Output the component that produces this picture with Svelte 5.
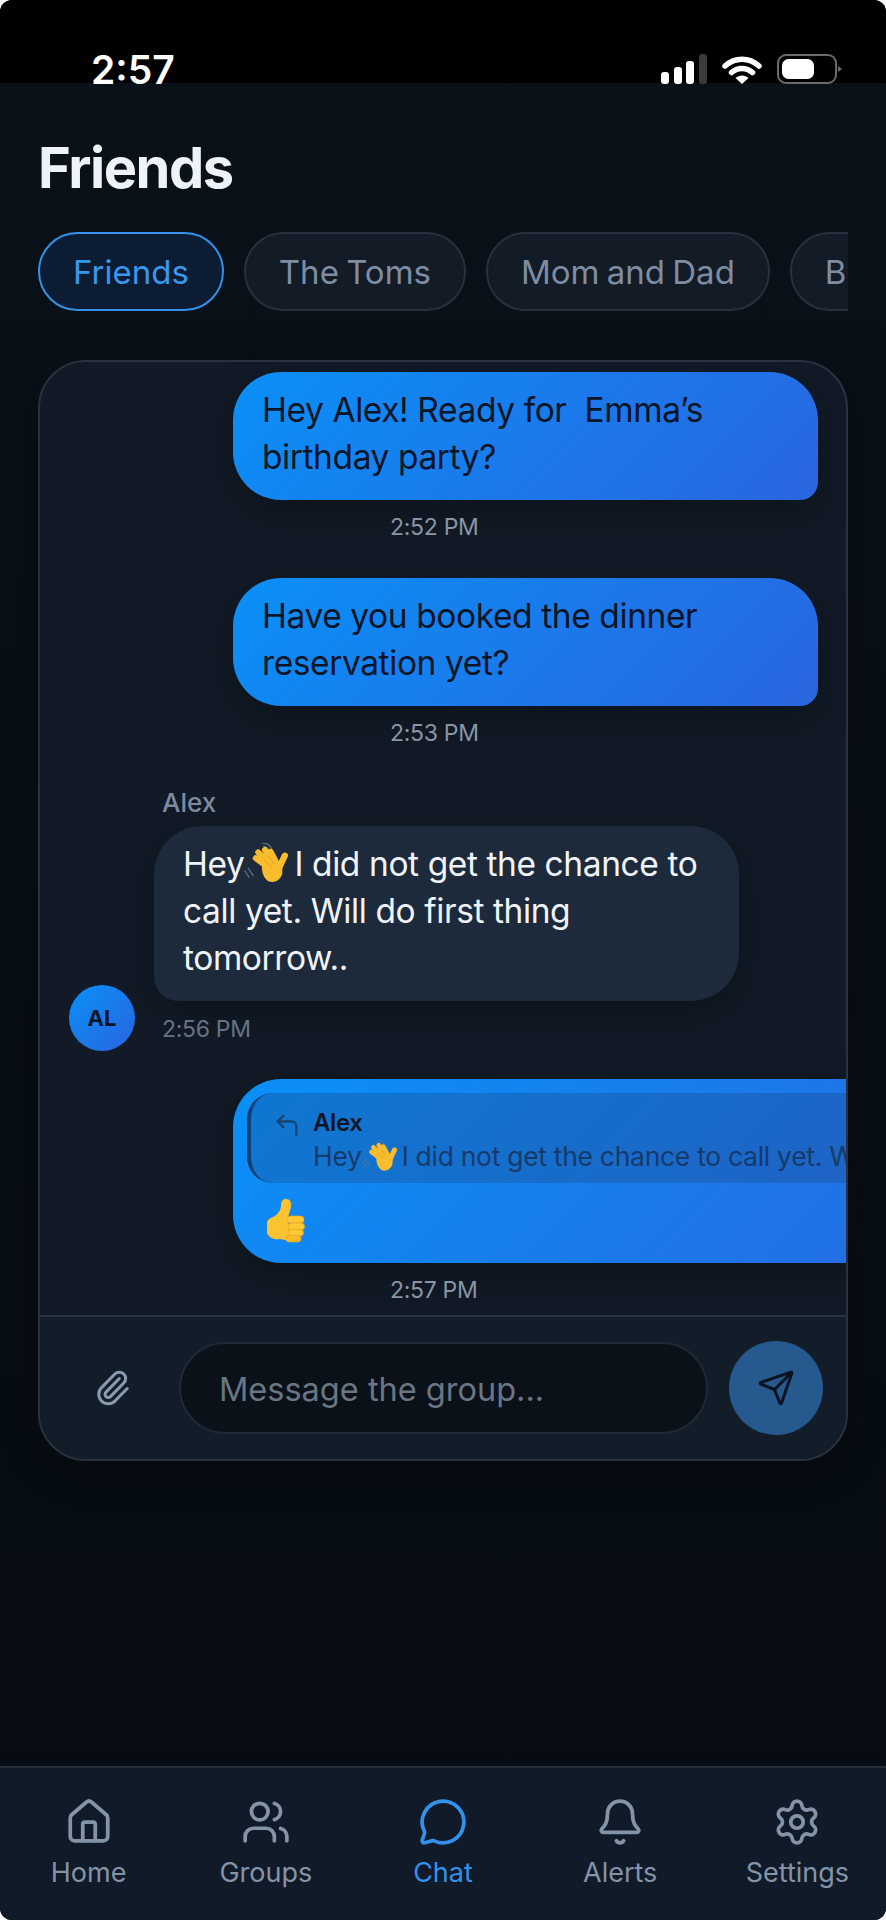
<script>
	const groups = ['Friends', 'The Toms', 'Mom and Dad', 'Best Friends'];

	const tabs = [
		{ label: 'Home', icon: 'home' },
		{ label: 'Groups', icon: 'users' },
		{ label: 'Chat', icon: 'chat', active: true },
		{ label: 'Alerts', icon: 'bell' },
		{ label: 'Settings', icon: 'gear' }
	];
</script>

{#snippet wave()}
	<svg class="wave" viewBox="0 0 60 50" aria-hidden="true">
		<path d="M5 30l6 9M1 33l5 8M23 4c3 0 6 2 7 4M22 0c4 0 9 2 11 6" fill="none" stroke="#6d7683" stroke-width="1.3" stroke-linecap="round" />
		<g stroke="#f9bc2e" stroke-width="7" stroke-linecap="round">
			<path d="M30 30 14 18M32 26 17 11M36 25 25 8M40 25 32 10" />
			<path d="M42 30 49 15" stroke-width="7.5" />
		</g>
		<path d="M22 24 46 22 46 36C44 44 37 48 30 46 24 43 20 34 22 24Z" fill="#f9bc2e" />
		<path d="M24 20 33 29M30 16 36 25" stroke="#e59a14" stroke-width="1" fill="none" />
	</svg>
{/snippet}

{#snippet icon(name)}
	<svg viewBox="0 0 24 24" fill="none" stroke="currentColor" stroke-width="1.8" stroke-linecap="round" stroke-linejoin="round" aria-hidden="true">
		{#if name === 'home'}
			<path d="M3 10a2 2 0 0 1 .7-1.5l7-6a2 2 0 0 1 2.6 0l7 6A2 2 0 0 1 21 10v9a2 2 0 0 1-2 2H5a2 2 0 0 1-2-2z" />
			<path d="M15 21v-8a1 1 0 0 0-1-1h-4a1 1 0 0 0-1 1v8" />
		{:else if name === 'users'}
			<path d="M16 21v-2a4 4 0 0 0-4-4H6a4 4 0 0 0-4 4v2" />
			<circle cx="9" cy="7" r="4" />
			<path d="M16 3.128a4 4 0 0 1 0 7.744" />
			<path d="M22 21v-2a4 4 0 0 0-3-3.87" />
		{:else if name === 'chat'}
			<path d="M2.992 16.342a2 2 0 0 1 .094 1.167l-1.065 3.29a1 1 0 0 0 1.236 1.168l3.413-.998a2 2 0 0 1 1.099.092 10 10 0 1 0-4.777-4.719" />
		{:else if name === 'bell'}
			<path d="M10.268 21a2 2 0 0 0 3.464 0" />
			<path d="M3.262 15.326A1 1 0 0 0 4 17h16a1 1 0 0 0 .74-1.673C19.41 13.956 18 12.499 18 8A6 6 0 0 0 6 8c0 4.499-1.411 5.956-2.738 7.326" />
		{:else if name === 'gear'}
			<path d="M9.671 4.136a2.34 2.34 0 0 1 4.659 0 2.34 2.34 0 0 0 3.319 1.915 2.34 2.34 0 0 1 2.33 4.033 2.34 2.34 0 0 0 0 3.831 2.34 2.34 0 0 1-2.33 4.033 2.34 2.34 0 0 0-3.319 1.915 2.34 2.34 0 0 1-4.659 0 2.34 2.34 0 0 0-3.32-1.915 2.34 2.34 0 0 1-2.33-4.033 2.34 2.34 0 0 0 0-3.831A2.34 2.34 0 0 1 6.35 6.051a2.34 2.34 0 0 0 3.319-1.915" />
			<circle cx="12" cy="12" r="3" />
		{/if}
	</svg>
{/snippet}

<div class="phone">
	<header class="status">
		<span class="clock">2:57</span>
		<div class="status-icons">
			<svg class="signal" viewBox="0 0 46 30" aria-hidden="true">
				<rect x="0" y="18" width="8" height="12" rx="3" fill="#fff" />
				<rect x="13" y="13" width="8" height="17" rx="3" fill="#fff" />
				<rect x="25" y="7" width="8" height="23" rx="3" fill="#fff" />
				<rect x="38" y="0" width="8" height="30" rx="3" fill="#3b3b3b" />
			</svg>
			<svg class="wifi" viewBox="0 0 40 28" aria-hidden="true">
				<path d="M3 10C13 1 27 1 37 10M9.5 16.5C15.5 11 24.5 11 30.5 16.5" fill="none" stroke="#fff" stroke-width="5.5" stroke-linecap="round" />
				<path d="M13.5 22C17 18.5 23 18.5 26.5 22L20 28Z" fill="#fff" />
			</svg>
			<svg class="battery" viewBox="0 0 65 30" aria-hidden="true">
				<rect x="1" y="1" width="58" height="28" rx="8" fill="none" stroke="#6a6a6a" stroke-width="2" />
				<rect x="5" y="5" width="32" height="20" rx="6.5" fill="#fff" />
				<path d="M61 12l4 3-4 3z" fill="#6a6a6a" />
			</svg>
		</div>
	</header>

	<main class="content">
		<h1 class="title">Friends</h1>

		<div class="chips">
			{#each groups as group, i}
				<button class="chip" class:active={i === 0}>{group}</button>
			{/each}
		</div>

		<section class="card">
			<div class="messages">
				<div class="msg-out">
					<div class="bubble out">Hey Alex! Ready for&nbsp; Emma’s birthday party?</div>
					<div class="time">2:52 PM</div>
				</div>

				<div class="msg-out">
					<div class="bubble out">Have you booked the dinner reservation yet?</div>
					<div class="time">2:53 PM</div>
				</div>

				<div class="msg-in">
					<div class="avatar">AL</div>
					<div class="msg-in-body">
						<div class="sender">Alex</div>
						<div class="bubble in">Hey{@render wave()}I did not get the chance to call yet. Will do first thing tomorrow..</div>
						<div class="time dim">2:56 PM</div>
					</div>
				</div>

				<div class="msg-out last">
					<div class="bubble out wide">
						<div class="quote">
							<svg class="quote-icon" viewBox="0 0 24 24" fill="none" stroke="currentColor" stroke-width="2" stroke-linecap="round" stroke-linejoin="round" aria-hidden="true">
								<path d="M20 21v-8a4 4 0 0 0-4-4H4" />
								<path d="M9 14 4 9l5-5" />
							</svg>
							<div class="quote-text">
								<div class="quote-name">Alex</div>
								<div class="quote-line">Hey{@render wave()}I did not get the chance to call yet. Will do first thing tomorrow..</div>
							</div>
						</div>
						<svg class="thumb" viewBox="0 0 40 44" aria-hidden="true">
							<path d="M1 24C1 21 4 19 7 18 11 16 15 12 15 6 15 1 18 0 20 0 24 0 26 3 25 8 24 12 23 15 22 18L24 42 14 40C8 41 3 39 1 34Z" fill="#fcc22f" />
							<rect x="21" y="17" width="17" height="7" rx="3.5" fill="#fdc935" stroke="#ee9f1d" stroke-width=".7" />
							<rect x="22" y="24" width="16.5" height="7" rx="3.5" fill="#fdc935" stroke="#ee9f1d" stroke-width=".7" />
							<rect x="22" y="30.5" width="15.5" height="6.5" rx="3.2" fill="#fdc935" stroke="#ee9f1d" stroke-width=".7" />
							<rect x="20" y="36.5" width="15" height="6.5" rx="3.2" fill="#fbbd2c" stroke="#ee9f1d" stroke-width=".7" />
						</svg>
					</div>
					<div class="time">2:57 PM</div>
				</div>
			</div>

			<div class="composer">
				<button class="attach" aria-label="Attach">
					<svg viewBox="0 0 24 24" fill="none" stroke="currentColor" stroke-width="1.9" stroke-linecap="round" stroke-linejoin="round" aria-hidden="true">
						<path d="M13.234 20.252 21 12.3" />
						<path d="m16 6-8.414 8.586a2 2 0 0 0 0 2.828 2 2 0 0 0 2.828 0l8.414-8.586a4 4 0 0 0 0-5.656 4 4 0 0 0-5.656 0l-8.415 8.585a6 6 0 1 0 8.486 8.486" />
					</svg>
				</button>
				<div class="input">Message the group...</div>
				<button class="send" aria-label="Send">
					<svg viewBox="0 0 24 24" fill="none" stroke="currentColor" stroke-width="1.9" stroke-linecap="round" stroke-linejoin="round" aria-hidden="true">
						<path d="M14.536 21.686a.5.5 0 0 0 .937-.024l6.5-19a.496.496 0 0 0-.635-.635l-19 6.5a.5.5 0 0 0-.024.937l7.93 3.18a2 2 0 0 1 1.112 1.11z" />
						<path d="m21.854 2.147-10.94 10.939" />
					</svg>
				</button>
			</div>
		</section>
	</main>

	<nav class="tabs">
		{#each tabs as tab}
			<div class="tab" class:active={tab.active}>
				<span class="tab-icon">{@render icon(tab.icon)}</span>
				<span class="tab-label">{tab.label}</span>
			</div>
		{/each}
	</nav>
</div>

<style>
	:global(body) {
		margin: 0;
		background: #fff;
	}

	.phone {
		display: flex;
		flex-direction: column;
		height: 1920px;
		overflow: hidden;
		border-radius: 12px;
		background: linear-gradient(180deg, #0a1119 0%, #070c14 100%);
		font-family: Inter, 'Noto Sans', sans-serif;
	}

	.status {
		display: flex;
		flex: none;
		justify-content: space-between;
		align-items: flex-end;
		height: 83px;
		padding: 0 44px 0 91px;
		background: #000;
	}
	.clock {
		margin-bottom: -6px;
		font-size: 39px;
		font-weight: 600;
		line-height: 1;
		color: #fff;
	}
	.status-icons {
		display: flex;
		align-items: flex-end;
		gap: 15px;
		margin-bottom: -1px;
	}
	.signal {
		width: 46px;
		height: 30px;
	}
	.wifi {
		width: 40px;
		height: 28px;
	}
	.battery {
		width: 65px;
		height: 30px;
	}

	.content {
		display: flex;
		flex: 1;
		flex-direction: column;
		min-height: 0;
		padding: 0 38px;
	}
	.title {
		margin: 53px 0 0;
		font-size: 56px;
		font-weight: 700;
		line-height: 64px;
		letter-spacing: -1.5px;
		color: #eef3fb;
	}

	.chips {
		display: flex;
		gap: 20px;
		width: 810px;
		margin-top: 32px;
		overflow: hidden;
	}
	.chip {
		flex: none;
		height: 79px;
		padding: 0 33px;
		border: 2px solid #27303c;
		border-radius: 40px;
		background: #121b26;
		font-family: inherit;
		font-size: 33px;
		word-spacing: -2px;
		color: #7f8da3;
	}
	.chip.active {
		border-color: #3391ea;
		background: #0c1d33;
		color: #3a97ee;
	}

	.card {
		display: flex;
		flex-direction: column;
		height: 1101px;
		margin-top: 49px;
		width: 810px;
		box-sizing: border-box;
		border: 2px solid #29323e;
		border-radius: 48px;
		overflow: hidden;
		background: #111a26;
		box-shadow: 0 10px 40px rgba(0, 0, 0, 0.3);
	}

	.messages {
		flex: 1;
		min-height: 0;
		overflow: hidden;
		padding: 10px 0 0 29px;
	}
	.msg-out {
		margin-bottom: 36px;
		padding-left: 164px;
	}
	.msg-out.last {
		margin-bottom: 0;
	}
	.bubble {
		box-sizing: border-box;
		width: 585px;
		padding: 15px 29px 19px;
		border-radius: 48px;
		font-size: 33.5px;
		line-height: 47px;
		letter-spacing: -0.4px;
		box-shadow: 0 12px 36px rgba(0, 0, 0, 0.28);
	}
	.bubble.out {
		border-bottom-right-radius: 18px;
		background: linear-gradient(135deg, #0a90f7 0%, #2a65e0 100%);
		color: #0a1525;
	}
	.bubble.wide {
		width: 860px;
		height: 184px;
		padding: 14px;
		border-radius: 48px;
	}
	.bubble.in {
		border-bottom-left-radius: 24px;
		background: #1c2a3c;
		color: #f0f4fa;
	}
	.wave {
		display: inline-block;
		width: 50px;
		height: 42px;
		vertical-align: -9px;
	}
	.time {
		margin-top: 12px;
		padding-left: 157px;
		font-size: 23px;
		line-height: 30px;
		letter-spacing: -0.3px;
		color: #8a95a5;
	}
	.time.dim {
		margin-top: 13px;
		padding-left: 8px;
		color: #667385;
	}

	.msg-in {
		display: flex;
		align-items: flex-end;
		gap: 19px;
		margin: 41px 0 28px;
	}
	.msg-in-body {
		padding-bottom: 7px;
	}
	.avatar {
		display: flex;
		flex: none;
		justify-content: center;
		align-items: center;
		width: 66px;
		height: 66px;
		border-radius: 50%;
		background: linear-gradient(135deg, #0a90f7 0%, #2a65e0 100%);
		font-size: 22px;
		font-weight: 700;
		color: #0a1525;
	}
	.sender {
		margin: 0 0 9px 8px;
		font-size: 26px;
		font-weight: 500;
		line-height: 28px;
		color: #7d8b9e;
	}

	.quote {
		display: flex;
		gap: 12px;
		height: 90px;
		box-sizing: border-box;
		padding: 15px 0 0 22px;
		overflow: hidden;
		border-left: 4px solid #123f72;
		border-radius: 26px 0 0 26px;
		background: rgba(24, 60, 110, 0.28);
	}
	.quote-icon {
		flex: none;
		width: 28px;
		height: 28px;
		margin-top: 3px;
		color: #164473;
	}
	.quote-text {
		min-width: 0;
		white-space: nowrap;
	}
	.quote-name {
		font-size: 24px;
		font-weight: 600;
		line-height: 30px;
		color: #0a1525;
	}
	.quote-line {
		font-size: 26.5px;
		line-height: 36px;
		letter-spacing: -0.3px;
		color: #163a6b;
	}
	.quote-line .wave {
		width: 40px;
		height: 33px;
		vertical-align: -7px;
	}
	.thumb {
		display: block;
		width: 40px;
		height: 44px;
		margin: 16px 0 0 19px;
	}

	.composer {
		display: flex;
		flex: none;
		align-items: center;
		gap: 21px;
		height: 144px;
		box-sizing: border-box;
		padding: 0 23px 0 28px;
		border-top: 2px solid #29323e;
		background: #131d29;
	}
	.attach {
		display: flex;
		flex: none;
		justify-content: center;
		align-items: center;
		width: 90px;
		height: 60px;
		padding: 0;
		border: 0;
		background: none;
		color: #8a9bb0;
	}
	.attach svg {
		width: 38px;
		height: 38px;
	}
	.input {
		flex: 1;
		height: 92px;
		box-sizing: border-box;
		padding: 0 38px;
		border: 2px solid #1f2833;
		border-radius: 46px;
		background: #0a1119;
		font-size: 32.5px;
		line-height: 91px;
		color: #6b7684;
	}
	.send {
		display: flex;
		flex: none;
		justify-content: center;
		align-items: center;
		width: 94px;
		height: 94px;
		padding: 0;
		border: 0;
		border-radius: 50%;
		background: #265a8f;
		color: #0a1420;
	}
	.send svg {
		width: 38px;
		height: 38px;
	}

	.tabs {
		display: grid;
		flex: none;
		grid-template-columns: repeat(5, 1fr);
		height: 154px;
		box-sizing: border-box;
		padding-top: 29px;
		border-top: 2px solid #232d38;
		background: #101a28;
	}
	.tab {
		display: flex;
		flex-direction: column;
		align-items: center;
		color: #8494a8;
	}
	.tab.active {
		color: #3391ea;
	}
	.tab-icon {
		display: block;
		width: 50px;
		height: 50px;
	}
	.tab-icon svg {
		display: block;
		width: 100%;
		height: 100%;
	}
	.tab-label {
		margin-top: 10px;
		font-size: 27px;
		line-height: 32px;
	}
</style>
